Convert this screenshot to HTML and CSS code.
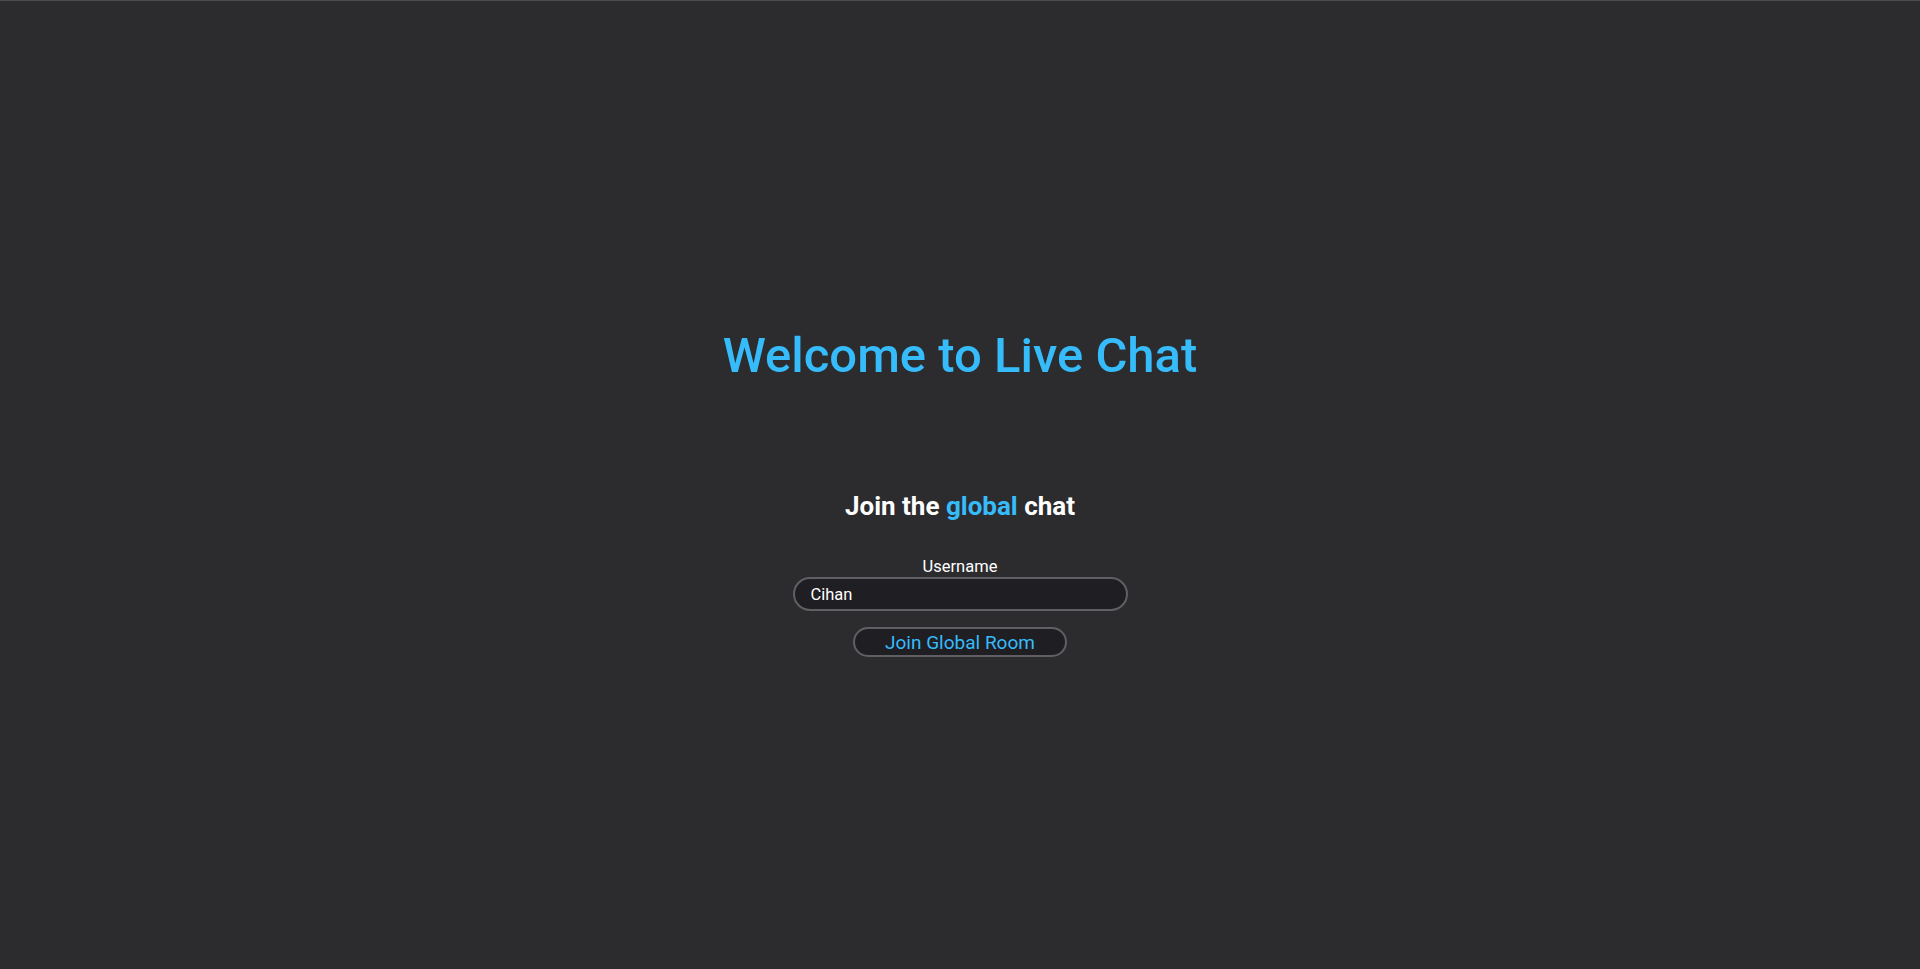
FILE: index.html
```html
<!DOCTYPE html>
<html lang="en">
<head>
<meta charset="utf-8">
<title>Live Chat</title>
<link rel="stylesheet" href="styles.css">
</head>
<body>
<main class="page">
  <h1 class="title">Welcome to Live Chat</h1>
  <h2 class="subtitle">Join the <span class="accent">global</span> chat</h2>
  <form class="join-form">
    <label class="label" for="username">Username</label>
    <input class="input" id="username" type="text" value="Cihan">
    <button class="btn" type="button">Join Global Room</button>
  </form>
</main>
</body>
</html>
```
FILE: styles.css
```css
html, body {
  margin: 0;
  padding: 0;
  height: 100%;
}
body {
  background: #2c2c2e;
  border-top: 1px solid #4d4d4f;
  box-sizing: border-box;
  font-family: Roboto, "Noto Sans", sans-serif;
  color: #ffffff;
}
.page {
  display: flex;
  flex-direction: column;
  align-items: center;
  padding-top: 327px;
}
.title {
  margin: 0;
  font-size: 49px;
  line-height: 56px;
  font-weight: 500;
  color: #36bbfb;
}
.subtitle {
  margin: 108px 0 0;
  font-size: 26px;
  line-height: 28px;
  font-weight: 700;
  color: #ffffff;
}
.accent {
  color: #36bbfb;
}
.join-form {
  display: flex;
  flex-direction: column;
  align-items: center;
  margin-top: 37px;
}
.label {
  font-size: 16.5px;
  line-height: 19px;
  font-weight: 400;
}
.input {
  margin-top: 1px;
  width: 335px;
  height: 34px;
  box-sizing: border-box;
  border: 2px solid #606064;
  border-radius: 17px;
  background: #1f1e23;
  color: #ffffff;
  font-family: Roboto, "Noto Sans", sans-serif;
  font-size: 16.5px;
  font-weight: 400;
  padding: 0 16px;
  outline: none;
}
.btn {
  margin-top: 16px;
  width: 214px;
  height: 30px;
  box-sizing: border-box;
  border: 2px solid #606064;
  border-radius: 15px;
  background: #1f1e23;
  color: #36bbfb;
  font-family: Roboto, "Noto Sans", sans-serif;
  font-size: 19px;
  font-weight: 400;
  padding: 0;
  cursor: pointer;
}
```
